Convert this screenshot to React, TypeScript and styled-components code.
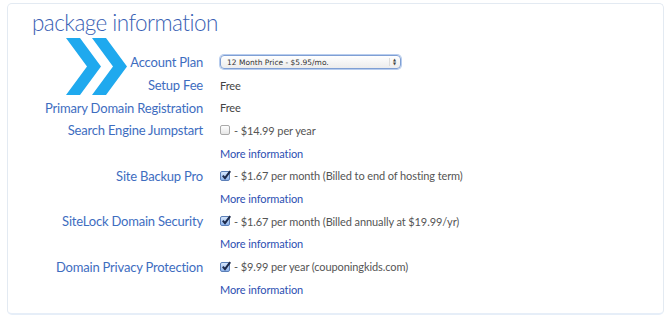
import React from "react";
import styled, { createGlobalStyle } from "styled-components";

const Global = createGlobalStyle`
  html, body { margin: 0; padding: 0; background: #ffffff; }
  body { font-family: Lato, "Open Sans", sans-serif; }
`;

const Panel = styled.section`
  position: relative;
  box-sizing: border-box;
  margin: 3px 0 0 7px;
  width: 657px;
  height: 312px;
  border: 1px solid #e3eaf2;
  border-bottom: 2px solid #e6eef8;
  border-radius: 5px;
  padding: 4px 0 0 0;
  background: #fff;
`;

const Title = styled.h1`
  margin: 0 0 0 24px;
  font-family: Lato, sans-serif;
  font-weight: 300;
  font-size: 22.5px;
  letter-spacing: -0.55px;
  line-height: 30px;
  color: #3a5fb4;
`;

const Chevrons = styled.svg`
  position: absolute;
  left: 58px;
  top: 34px;
`;

const Grid = styled.div`
  margin-top: 13px;
  display: grid;
  grid-template-columns: 195px 1fr;
  column-gap: 17px;
  grid-auto-rows: 22.7px;
  align-items: center;
`;

const Label = styled.div`
  text-align: right;
  font-size: 13px;
  letter-spacing: -0.2px;
  color: #3e6dbf;
  white-space: nowrap;
`;

const Value = styled.div`
  display: flex;
  align-items: center;
  font-size: 11px;
  letter-spacing: -0.1px;
  color: #555;
  white-space: nowrap;
`;

const Plain = styled.span<{ $dark?: boolean }>`
  color: ${(p) => (p.$dark ? "#444" : "#555")};
`;

const Link = styled.a`
  font-size: 11px;
  letter-spacing: -0.1px;
  color: #2c4fb2;
  text-decoration: none;
  grid-column: 2;
`;

const Select = styled.div`
  box-sizing: border-box;
  width: 181px;
  height: 14px;
  border: 1px solid #7f9fd4;
  border-radius: 4px;
  background: linear-gradient(#ffffff, #ececec);
  box-shadow: 0 0 0 1px #b8cdee;
  display: flex;
  align-items: center;
  justify-content: space-between;
  padding: 0 4px 0 6px;
  font-family: "DejaVu Sans", sans-serif;
  font-size: 7.5px;
  letter-spacing: 0;
  color: #333;
`;

const Arrows = styled.span`
  display: flex;
  flex-direction: column;
  align-items: center;
  font-size: 4px;
  line-height: 4px;
  color: #444;
  border-left: 1px solid #ddd;
  padding-left: 3px;
`;

const Box = styled.span<{ $checked?: boolean }>`
  position: relative;
  box-sizing: border-box;
  width: 10px;
  height: 10px;
  margin-right: 4px;
  border: 1px solid ${(p) => (p.$checked ? "#5b7fb8" : "#aaa")};
  border-radius: 2px;
  background: ${(p) =>
    p.$checked ? "linear-gradient(#d6e6fb, #8fb4ec)" : "linear-gradient(#fff, #e6e6e6)"};
  display: inline-flex;
  align-items: center;
  justify-content: center;
`;

const Check = () => (
  <svg width="10" height="10" viewBox="0 0 10 10" style={{ position: "absolute", left: 0, top: -2 }}>
    <path d="M1.8 5.6 L4 8.2 L9.2 1.2" fill="none" stroke="#1d2a4a" strokeWidth="2" />
  </svg>
);

const CheckBox = ({ checked }: { checked?: boolean }) => (
  <Box $checked={checked}>{checked && <Check />}</Box>
);

type Extra = { label: string; checked: boolean; text: string };

const extras: Extra[] = [
  { label: "Search Engine Jumpstart", checked: false, text: "- $14.99 per year" },
  { label: "Site Backup Pro", checked: true, text: "- $1.67 per month (Billed to end of hosting term)" },
  { label: "SiteLock Domain Security", checked: true, text: "- $1.67 per month (Billed annually at $19.99/yr)" },
  { label: "Domain Privacy Protection", checked: true, text: "- $9.99 per year (couponingkids.com)" },
];

export default function App() {
  return (
    <>
      <Global />
      <Panel>
        <Title>package information</Title>
        <Chevrons width="62" height="57" viewBox="0 0 62 57">
          <polygon points="0,0 14,0 35,28.5 14,57 0,57 21,28.5" fill="#1fa9ee" />
          <polygon points="26,0 40,0 61,28.5 40,57 26,57 47,28.5" fill="#1fa9ee" />
        </Chevrons>
        <Grid>
          <Label>Account Plan</Label>
          <Value>
            <Select>
              <span>12 Month Price - $5.95/mo.</span>
              <Arrows>
                <span>▲</span>
                <span>▼</span>
              </Arrows>
            </Select>
          </Value>
          <Label>Setup Fee</Label>
          <Value>
            <Plain $dark>Free</Plain>
          </Value>
          <Label>Primary Domain Registration</Label>
          <Value>
            <Plain $dark>Free</Plain>
          </Value>
          {extras.map((e) => (
            <React.Fragment key={e.label}>
              <Label>{e.label}</Label>
              <Value>
                <CheckBox checked={e.checked} />
                <Plain>{e.text}</Plain>
              </Value>
              <Link href="#">More information</Link>
            </React.Fragment>
          ))}
        </Grid>
      </Panel>
    </>
  );
}
